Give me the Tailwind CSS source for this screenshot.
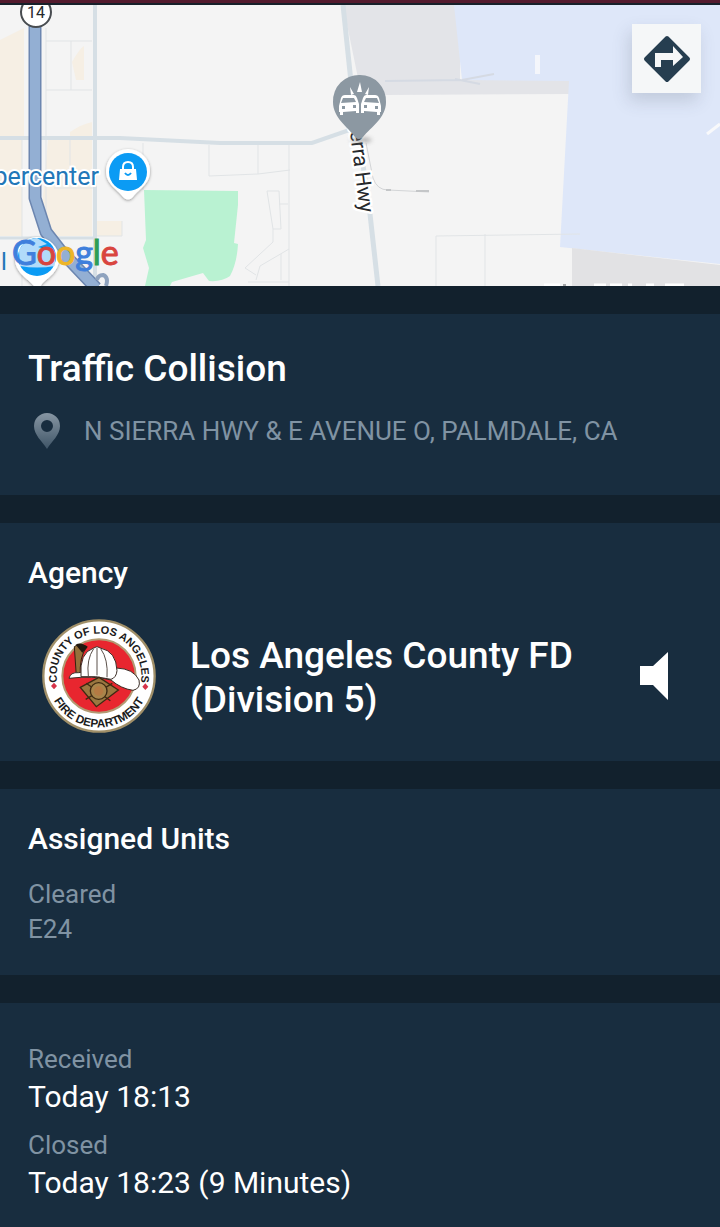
<!DOCTYPE html>
<html lang="en">
<head>
    <meta charset="UTF-8">
    <meta name="viewport" content="width=device-width, initial-scale=1.0">
    <title>Traffic Collision</title>
    <script src="https://cdn.jsdelivr.net/npm/@tailwindcss/browser@4"></script>
</head>
<body class="bg-[#12212d] font-['Roboto',sans-serif] text-white">
    <div class="flex min-h-screen flex-col">
        <div class="h-[5px] border-b-2 border-[#17202a] bg-[#541b2e]"></div>

        <!-- Map -->
        <div class="relative h-[281px] overflow-hidden bg-[#f4f4f4]">
            <svg class="block h-full w-full" viewBox="0 5 720 281" preserveAspectRatio="xMidYMid slice" role="img" aria-label="Map">
                <defs>
                    <filter id="pinShadow" x="-30%" y="-30%" width="160%" height="160%">
                        <feDropShadow dx="0" dy="1" stdDeviation="1.5" flood-color="#000" flood-opacity="0.4"/>
                    </filter>
                    <filter id="soft" x="-50%" y="-50%" width="200%" height="200%"><feGaussianBlur stdDeviation="2"/></filter>
                </defs>
                <rect y="5" width="720" height="281" fill="#f4f4f4"/>

                <!-- Shopping areas -->
                <g fill="#f6efe4">
                    <path d="M0 40L24 28V140H0zM0 140H22V236H0zM48 140H92V236H48L42 208zM97 221H122V236H97z"/>
                    <path d="M72 62Q80 48 84 46V80H76zM70 138V132Q82 124 92 122V140z"/>
                </g>

                <!-- Airfield -->
                <path d="M343 5H460V80L572 80L570 94L385 95L358 78z" fill="#e3e4e8"/>
                <path d="M454 5H720V264L560 247L569 81L462 80z" fill="#dee7f9"/>
                <path d="M572 248L720 265V286H572z" fill="#e2e2e4"/>
                <path d="M385 81L462 80L494 74M455 79L480 84" stroke="#d5dae3" stroke-width="2" fill="none"/>
                <path d="M535 55H540V74H535z" fill="#f4f6fb"/>
                <path d="M707 134L720 124" stroke="#f8f9fb" stroke-width="3"/>
                <path d="M544 285H560M594 285H606M610 285H622M628 285H632M646 285H654M665 285H684" stroke="#fff" stroke-width="3"/>
                <path d="M563 285H566" stroke="#55585c" stroke-width="1"/>

                <!-- Park -->
                <path d="M144 190L238 191L238 205L234 243L238 244Q237 263 230 276Q222 282 209 281L203 273L172 282L170 286H145L149 268L143 248L146 240z" fill="#b9f2d2"/>

                <!-- Minor roads -->
                <g fill="none" stroke="#e1e4e6" stroke-width="1">
                    <path d="M46 28V236M46 41H92M71 41V90M46 90H92M22 140V286M70 140V165M54 188H95M122 221V236H97"/>
                    <path d="M143 143V190M209 145V176L258 174L290 170M258 145V174M289 145V286M267 191H279L281 229H273zM279 204H288M273 229V242L245 268L256 275M289 249L260 266L256 280M281 254V280M248 282H289"/>
                    <path d="M436 286V236L580 234M485 234V286"/>
                </g>
                <path d="M366 143L373 178Q377 190 388 190L429 192" fill="none" stroke="#d3d5d7" stroke-width="1"/>
                <path d="M386 190H391M416 191H429" stroke="#c4c6c8" stroke-width="2"/>

                <!-- Main roads -->
                <g fill="none" stroke="#d6dfe5">
                    <path d="M0 138H120L220 143H312L358 127" stroke-width="4"/>
                    <path d="M95 5V286" stroke-width="4"/>
                    <path d="M0 238H95" stroke-width="3"/>
                    <path d="M343 5L351 82L358 130L370 214L378 286" stroke-width="5"/>
                </g>

                <!-- Freeway -->
                <path d="M35 5V198L46 232L60 250L96 288" fill="none" stroke="#6c86b0" stroke-width="13" stroke-linejoin="round"/>
                <path d="M35 5V198L46 232L60 250L96 288" fill="none" stroke="#93afd3" stroke-width="10" stroke-linejoin="round"/>
                <path d="M97 280Q98 275 103 275Q109 277 106 286" fill="none" stroke="#8fa3be" stroke-width="4"/>
                <circle cx="36" cy="12" r="15" fill="#fff" stroke="#484c50" stroke-width="2"/>
                <text x="36" y="18" text-anchor="middle" font-size="16" fill="#24282c">14</text>

                <!-- Store label and pin -->
                <text x="99" y="185" text-anchor="end" font-size="25" fill="#2277b8" stroke="#fff" stroke-width="4" stroke-linejoin="round" paint-order="stroke">Supercenter</text>
                <g filter="url(#pinShadow)">
                    <path d="M128 149A22 22 0 0 1 150 171C150 184 140 188 133 197Q128 202 123 197C116 188 106 184 106 171A22 22 0 0 1 128 149z" fill="#fff"/>
                </g>
                <circle cx="128" cy="172" r="19" fill="#0b9bf4"/>
                <path d="M120 169H136L137 180H119z" fill="#fff"/>
                <path d="M123 170V167Q123 162 128 162Q133 162 133 167V170" fill="none" stroke="#fff" stroke-width="2"/>
                <path d="M125 173Q128 177 131 173" fill="none" stroke="#0b9bf4" stroke-width="2"/>

                <text x="1" y="270" font-size="24" fill="#2277b8">l</text>
                <g filter="url(#pinShadow)">
                    <path d="M37 237A22 22 0 0 1 59 259C59 272 47 278 42 284L38 290L32 284C27 278 15 272 15 259A22 22 0 0 1 37 237z" fill="#fff"/>
                </g>
                <circle cx="37" cy="257" r="19" fill="#0b9bf4"/>
                <path d="M19 250Q26 238 37 238L47 244L38 247L55 252V266Q37 269 20 266z" fill="#cfe6fa" fill-opacity="0.85"/>
                <text x="12" y="265" font-family="Lato, sans-serif" font-size="34" stroke-width="1"><tspan fill="#3f7fdc" stroke="#3f7fdc">G</tspan><tspan fill="#d9453f" stroke="#d9453f">o</tspan><tspan fill="#edb528" stroke="#edb528">o</tspan><tspan fill="#3f7fdc" stroke="#3f7fdc">g</tspan><tspan fill="#2f9e55" stroke="#2f9e55">l</tspan><tspan fill="#d9453f" stroke="#d9453f">e</tspan></text>

                <!-- Street name, hidden in part by the incident pin -->
                <text transform="translate(360 213) rotate(83)" text-anchor="end" font-size="21" fill="#26282b" stroke="#fff" stroke-width="5" stroke-linejoin="round" paint-order="stroke">Sierra Hwy</text>

                <!-- Incident pin -->
                <ellipse cx="361" cy="140" rx="11" ry="3" fill="#777" opacity="0.5" filter="url(#soft)"/>
                <path d="M360 75A26 26 0 0 1 386 102C386 118 371 127 363 137Q359 141 355 137C348 127 333 118 333 102A26 26 0 0 1 360 75z" fill="#8c98a2"/>
                <g fill="#fff">
                    <path d="M360 82L362 92H357zM350 87L354 94L351 95zM369 87L368 95L365 94z"/>
                    <path fill-rule="evenodd" d="M341 98Q342 95 345 95L354 95Q356 95 357 98L359 104V113H356V111L343 112V115H340V112H339V106zM343 98L341 103L356 102L354 98zM342 106V109H345V106zM353 105V108H356V105z"/>
                    <path fill-rule="evenodd" d="M379 98Q378 95 375 95L366 95Q364 95 363 98L361 104V113H364V111L377 112V115H380V112H381V106zM377 98L379 103L364 102L366 98zM378 106V109H375V106zM367 105V108H364V105z"/>
                </g>
            </svg>
            <button type="button" aria-label="Directions" class="absolute top-[19px] right-[19px] flex size-[69px] items-center justify-center bg-[#f5f7f8] shadow-[-3px_8px_16px_rgba(60,70,90,0.18)]">
                <svg class="size-12" viewBox="0 0 48 48">
                    <path d="M24 3L45 24L24 45L3 24z" fill="#263e50" stroke="#263e50" stroke-width="4" stroke-linejoin="round"/>
                    <path d="M12 32V18H30V11L40 22L30 31V25H18V32z" fill="#f5f7f8"/>
                </svg>
            </button>
        </div>

        <main class="flex flex-1 flex-col gap-7 pt-7">
            <section class="bg-[#182d3f] px-7 pt-[33px] pb-11">
                <h1 class="text-[37px] leading-[44px] font-medium">Traffic Collision</h1>
                <div class="mt-5 flex items-center gap-5 leading-10">
                    <svg class="h-9 w-9 shrink-0" viewBox="0 0 36 36" aria-hidden="true">
                        <defs>
                            <linearGradient id="pinFill" x1="0" y1="0" x2="0" y2="1">
                                <stop offset="0" stop-color="#8796a3"/>
                                <stop offset="1" stop-color="#3f5567"/>
                            </linearGradient>
                        </defs>
                        <path fill="url(#pinFill)" fill-rule="evenodd" d="M19 0A13 13 0 0 1 32 13C32 22 24 28 19 36C14 28 6 22 6 13A13 13 0 0 1 19 0zM19 7A6 6 0 1 0 19 19A6 6 0 1 0 19 7z"/>
                    </svg>
                    <p class="text-[26px] text-[#8093a3]">N SIERRA HWY &amp; E AVENUE O, PALMDALE, CA</p>
                </div>
            </section>

            <section class="bg-[#182d3f] px-7 pt-8 pb-7">
                <h2 class="text-[30px] leading-9 font-medium">Agency</h2>
                <div class="mt-7 flex items-center pr-6 pl-3.5">
                    <!-- County seal -->
                    <svg class="size-[114px] shrink-0" viewBox="35 29 342 342" role="img" aria-label="County of Los Angeles Fire Department">
                        <defs>
                            <path id="sealTop" d="M84 235A127 127 0 1 1 328 235"/>
                            <path id="sealBottom" d="M52 200A154 154 0 0 0 360 200"/>
                        </defs>
                        <circle cx="206" cy="200" r="167" fill="#fff" stroke="#a08f68" stroke-width="7"/>
                        <circle cx="206" cy="200" r="110" fill="#e8262f" stroke="#b29a73" stroke-width="6"/>
                        <g font-family="Liberation Sans, sans-serif" font-weight="700" fill="#1b1b1b" text-anchor="middle">
                            <text font-size="33"><textPath href="#sealTop" startOffset="50%">COUNTY OF LOS ANGELES</textPath></text>
                            <text font-size="35"><textPath href="#sealBottom" startOffset="50%">FIRE DEPARTMENT</textPath></text>
                        </g>
                        <path d="M71 220L80 230L71 240L62 230zM345 222L354 232L345 242L336 232z" fill="#d6334a"/>
                        <path d="M132 112Q146 100 170 112Q146 140 150 205L138 200z" fill="#95713b" stroke="#33230f" stroke-width="3"/>
                        <path d="M136 106Q152 96 172 113L156 130z" fill="#21180f"/>
                        <path d="M116 207Q120 188 145 190L258 176Q310 178 326 212Q332 238 308 243Q272 238 242 212Q190 198 116 207z" fill="#fff" stroke="#3a2c25" stroke-width="3"/>
                        <path d="M152 202Q146 130 190 116Q200 108 210 116Q258 126 260 184Q258 205 242 210Q196 198 152 202z" fill="#fff" stroke="#3a2c25" stroke-width="3"/>
                        <path d="M190 118Q168 150 174 200M200 116V198M211 118Q234 150 230 204" fill="none" stroke="#5a504a" stroke-width="3"/>
                        <path d="M150 234L206 204L264 242L198 292z" fill="#9a7740" stroke="#3d2a12" stroke-width="4"/>
                        <path d="M168 222L240 274M246 222L166 270" stroke="#3d2a12" stroke-width="4"/>
                        <circle cx="205" cy="245" r="25" fill="#a9854b" stroke="#3d2a12" stroke-width="4"/>
                        <circle cx="205" cy="245" r="14" fill="#b57a43"/>
                    </svg>
                    <p class="ml-[34px] flex-1 pt-1 text-[37px] leading-[44px] font-medium">Los Angeles County FD<br>(Division 5)</p>
                    <button type="button" aria-label="Play audio" class="shrink-0">
                        <svg class="h-12 w-7" viewBox="0 0 28 48"><path d="M0 14H13L28 0V48L13 33H0z" fill="#fff"/></svg>
                    </button>
                </div>
            </section>

            <section class="bg-[#182d3f] px-7 pt-8 pb-7">
                <h2 class="text-[30px] leading-9 font-medium">Assigned Units</h2>
                <div class="mt-5 text-[26px] leading-[35px] text-[#8093a3]">
                    <p>Cleared</p>
                    <p>E24</p>
                </div>
            </section>

            <section class="flex-1 bg-[#182d3f] px-7 pt-[37px] pb-6">
                <dl class="flex flex-col gap-2.5 leading-[38px]">
                    <div>
                        <dt class="text-[26px] text-[#8093a3]">Received</dt>
                        <dd class="text-[30px]">Today 18:13</dd>
                    </div>
                    <div>
                        <dt class="text-[26px] text-[#8093a3]">Closed</dt>
                        <dd class="text-[30px]">Today 18:23 (9 Minutes)</dd>
                    </div>
                </dl>
            </section>
        </main>
    </div>
</body>
</html>
